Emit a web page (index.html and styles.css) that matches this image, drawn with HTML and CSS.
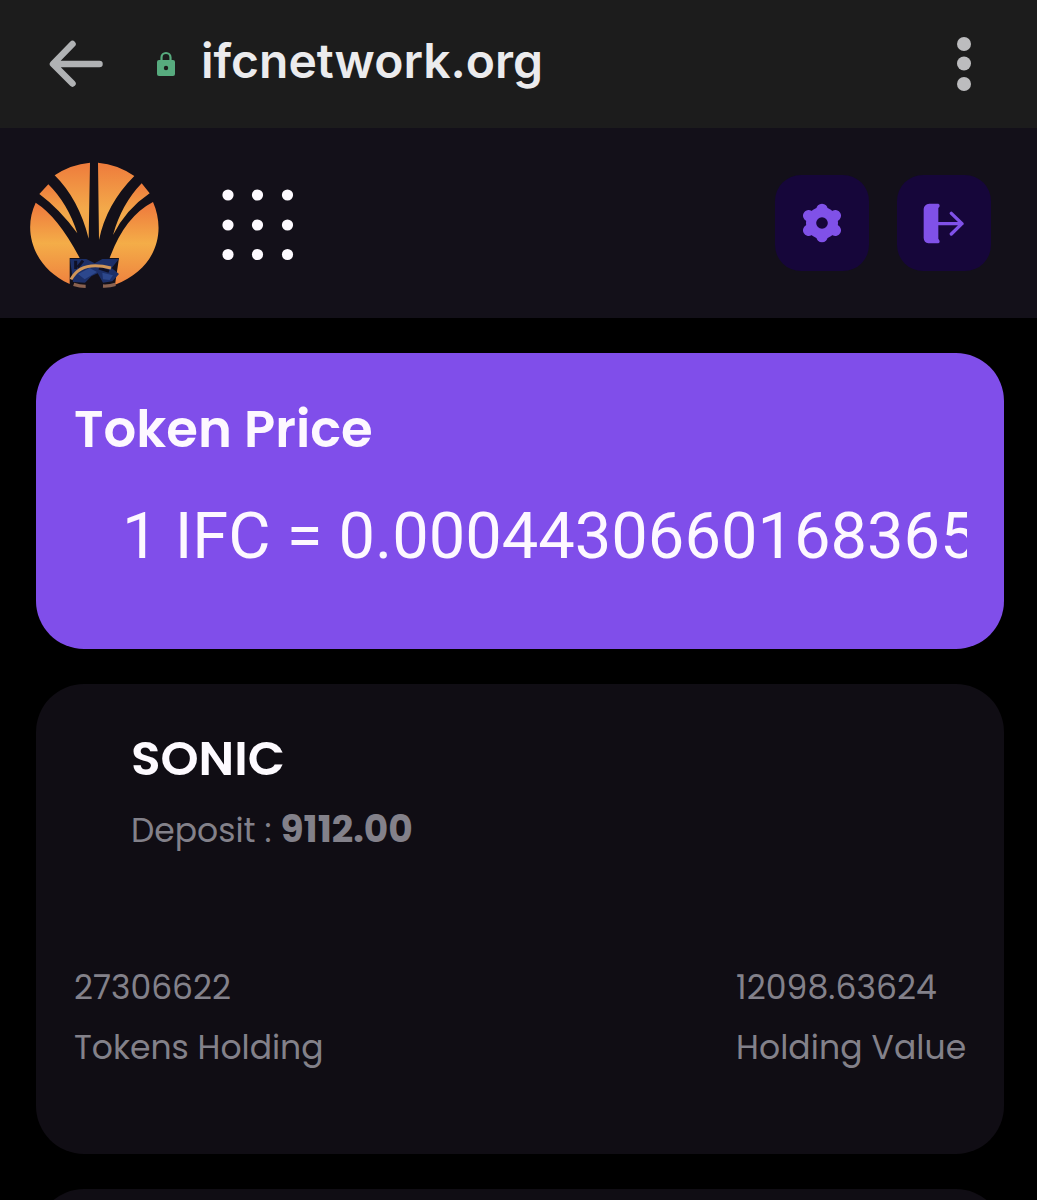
FILE: index.html
```html
<!DOCTYPE html>
<html lang="en">
<head>
    <meta charset="UTF-8">
    <meta name="viewport" content="width=device-width, initial-scale=1.0">
    <title>ifcnetwork.org</title>
    <link rel="stylesheet" href="styles.css">
</head>
<body>
    <div class="browser-bar">
        <svg class="back" viewBox="0 0 54 48" fill="none" stroke="#b0b2b4" stroke-width="6.5" stroke-linecap="round" stroke-linejoin="round">
            <path d="M23.5 4 L4 24 L23.5 43.5 M5 24 H50.5"/>
        </svg>
        <svg class="lock" viewBox="0 0 20 26">
            <path d="M5.5 11 V6.500 a4.500 4.500 0 0 1 9 0 V11" fill="none" stroke="#57ab7e" stroke-width="2.200"/>
            <rect x="1" y="9" width="18" height="16" rx="2" fill="#57ab7e"/>
            <circle cx="10" cy="17" r="2.200" fill="#1c1c1c"/>
        </svg>
        <span class="url">ifcnetwork.org</span>
        <svg class="more" viewBox="0 0 14 54" fill="#bcbcbe">
            <circle cx="7" cy="7" r="7"/>
            <circle cx="7" cy="26.500" r="7"/>
            <circle cx="7" cy="47" r="7"/>
        </svg>
    </div>

    <header class="header">
        <svg class="logo" viewBox="55 58 399 384">
            <defs>
                <linearGradient id="petal" x1="0" y1="0" x2="0" y2="1">
                    <stop offset="0" stop-color="#ee7b3c"/>
                    <stop offset="0.6" stop-color="#f3a94a"/>
                    <stop offset="1" stop-color="#f0a548"/>
                </linearGradient>
                <linearGradient id="side" x1="0" y1="0" x2="0" y2="1">
                    <stop offset="0" stop-color="#ee773c"/>
                    <stop offset="0.5" stop-color="#f4ad48"/>
                    <stop offset="1" stop-color="#ee823f"/>
                </linearGradient>
            </defs>
            <!-- upper petals -->
            <path fill="url(#petal)" d="M241 66 Q183 71 135 104 Q207 175 237 294 Z"/>
            <path fill="url(#petal)" d="M265 66 Q324 71 374 106 Q290 190 268 298 Z"/>
            <!-- narrow petals -->
            <path fill="url(#petal)" d="M116 131 L89 160 Q150 205 203 278 Q174 188 116 131 Z"/>
            <path fill="url(#petal)" d="M396 128 L420 158 Q350 205 310 283 Q336 190 396 128 Z"/>
            <!-- side petals -->
            <path fill="url(#side)" d="M78 186 Q145 228 210 352 H180 V430 C70 380 38 270 78 186 Z"/>
            <path fill="url(#side)" d="M430 184 Q345 228 300 352 H328 L316 432 C440 385 470 275 430 184 Z"/>
            <!-- ribbon -->
            <path fill="#1c2f68" d="M181 355 H230 L255 368 L278 355 H328 L306 382 L328 400 L308 422 L280 426 L264 398 L246 406 L226 426 L190 424 Z"/>
            <path fill="#2c478c" d="M205 400 L240 382 L262 394 L225 416 Z M278 396 L310 404 L300 418 L280 416 Z"/>
            <path fill="none" stroke="#0f1026" stroke-width="9" d="M198 360 V385 M220 360 L204 380 M268 382 L298 392"/>
            <path fill="none" stroke="#cf9558" stroke-width="9" d="M184 416 Q215 358 304 382"/>
            <path fill="none" stroke="#8a6250" stroke-width="10" d="M192 431 Q210 437 228 437 M280 436 Q300 437 317 431"/>
        </svg>
        <svg class="menu" viewBox="0 0 72 72" fill="#fdfaff">
            <circle cx="6" cy="6" r="5.600"/>
            <circle cx="35.500" cy="6" r="5.600"/>
            <circle cx="65.500" cy="6" r="5.600"/>
            <circle cx="6" cy="36" r="5.600"/>
            <circle cx="35.500" cy="36" r="5.600"/>
            <circle cx="65.500" cy="36" r="5.600"/>
            <circle cx="6" cy="65.500" r="5.600"/>
            <circle cx="35.500" cy="65.500" r="5.600"/>
            <circle cx="65.500" cy="65.500" r="5.600"/>
        </svg>
        <div class="actions">
            <button class="tile" aria-label="Settings">
                <svg class="gear" viewBox="-60 -60 120 120">
                    <circle r="48" fill="#8051e8"/>
                    <path d="M0 -41 V41 M-40 -22 L40 22 M-40 22 L40 -22" fill="none" stroke="#8051e8" stroke-width="34" stroke-linecap="round"/>
                    <circle r="17.500" fill="#16063a"/>
                </svg>
            </button>
            <button class="tile" aria-label="Log out">
                <svg class="logout" viewBox="488 127 123 123">
                    <path fill="#8051e8" d="M507 129 H534 Q538 130 538 135 Q538 139 534 142 V234 Q538 238 538 243 Q537 248 533 248 H504 Q491 246 490 232 V145 Q491 131 507 129 Z"/>
                    <path d="M534 189 H605 M573 158 L605 189 L573 220" fill="none" stroke="#8051e8" stroke-width="10" stroke-linecap="round" stroke-linejoin="round"/>
                </svg>
            </button>
        </div>
    </header>

    <main class="content">
        <section class="card price-card">
            <h2 class="price-title">Token Price</h2>
            <div class="ticker"><span class="price">1 IFC = 0.0004430660168365</span></div>
        </section>

        <section class="card coin-card">
            <div class="coin">
                <h3 class="coin-name">SONIC</h3>
                <p class="deposit"><span class="deposit-label">Deposit :</span><strong class="deposit-value">9112.00</strong></p>
            </div>
            <div class="stats">
                <div class="stat">
                    <span class="tokens-value">27306622</span>
                    <span class="tokens-label">Tokens Holding</span>
                </div>
                <div class="stat stat-right">
                    <span class="holding-value">12098.63624</span>
                    <span class="holding-label">Holding Value</span>
                </div>
            </div>
        </section>

        <section class="card next-card"></section>
    </main>
</body>
</html>
```
FILE: styles.css
```css
* {
    box-sizing: border-box;
    margin: 0;
    padding: 0;
}

body {
    height: 1200px;
    overflow: hidden;
    display: flex;
    flex-direction: column;
    background-color: #000;
    color: #fdf8ff;
    font-family: Poppins, Inter, sans-serif;
}

svg {
    display: block;
    flex: none;
}

/* browser bar */
.browser-bar {
    flex: none;
    display: flex;
    align-items: center;
    height: 128px;
    padding: 0 66px 1px 49px;
    background-color: #1c1c1c;
}

.back {
    width: 54px;
    height: 48px;
}

.lock {
    width: 20px;
    height: 26px;
    margin-left: 53px;
}

.url {
    margin-left: 25px;
    padding-bottom: 5px;
    font-family: Inter, sans-serif;
    font-size: 48px;
    font-weight: 600;
    line-height: 60px;
    color: #ebebed;
}

.more {
    width: 14px;
    height: 54px;
    margin-left: auto;
}

/* site header */
.header {
    flex: none;
    display: flex;
    align-items: center;
    height: 190px;
    padding: 0 46px 0 28px;
    background-color: #131019;
}

.logo {
    width: 133px;
    height: 128px;
    margin-top: 1px;
}

.menu {
    width: 72px;
    height: 72px;
    margin: 3px 0 0 61px;
}

.actions {
    display: flex;
    gap: 28px;
    margin-left: auto;
}

.tile {
    display: flex;
    align-items: center;
    justify-content: center;
    width: 94px;
    height: 96px;
    border: none;
    border-radius: 26px;
    background-color: #16063a;
}

.gear {
    width: 40px;
    height: 40px;
}

.logout {
    width: 41px;
    height: 41px;
    margin-right: 2px;
}

/* cards */
.content {
    flex: 1;
    min-height: 0;
    display: flex;
    flex-direction: column;
    gap: 35px;
    padding: 35px 33px 0 36px;
    overflow: hidden;
}

.card {
    flex: none;
    border-radius: 48px;
    background-color: #100d14;
}

.price-card {
    height: 296px;
    padding: 46px 37px 0 38px;
    background-color: #804eea;
}

.price-title {
    font-size: 51.3px;
    font-weight: 600;
    line-height: 60px;
}

.ticker {
    margin-top: 33px;
    padding-left: 48px;
    overflow: hidden;
    white-space: nowrap;
}

.price {
    display: block;
    font-family: Roboto, sans-serif;
    font-size: 65px;
    line-height: 88px;
}

.coin-card {
    height: 470px;
    padding: 44px 38px 0 38px;
    color: #83818a;
}

.coin {
    height: 230px;
    padding-left: 57px;
}

.coin-name {
    font-size: 48.5px;
    font-weight: 600;
    line-height: 60px;
    color: #fdfaff;
}

.deposit {
    display: flex;
    align-items: baseline;
    gap: 9px;
    margin-top: 11px;
    font-size: 33px;
    font-weight: 400;
    line-height: 60px;
}

.deposit-value {
    font-size: 37.6px;
    font-weight: 700;
}

.stats {
    display: flex;
    justify-content: space-between;
    font-size: 33px;
    font-weight: 400;
    line-height: 60px;
}

.stat {
    display: flex;
    flex-direction: column;
}

.stat-right {
    width: 230px;
    white-space: nowrap;
    letter-spacing: 0.1px;
}

.next-card {
    height: 470px;
}
```
